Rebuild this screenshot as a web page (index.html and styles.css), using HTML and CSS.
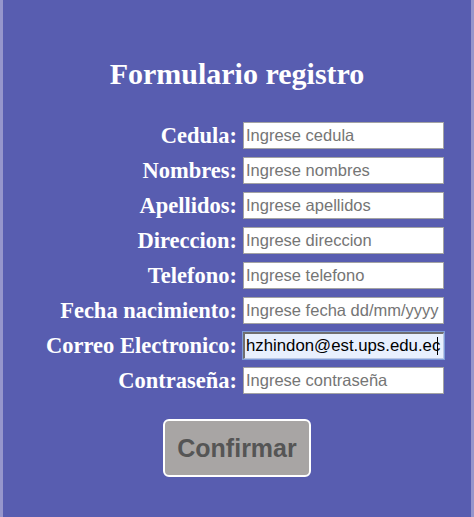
FILE: index.html
```html
<!DOCTYPE html>
<html lang="es">
<head>
<meta charset="utf-8">
<title>Formulario registro</title>
<link rel="stylesheet" href="styles.css">
</head>
<body>
<div class="page">
  <h1 class="title">Formulario registro</h1>
  <form class="form">
    <label class="lbl" for="cedula">Cedula:</label>
    <input class="field" id="cedula" type="text" placeholder="Ingrese cedula">
    <label class="lbl" for="nombres">Nombres:</label>
    <input class="field" id="nombres" type="text" placeholder="Ingrese nombres">
    <label class="lbl" for="apellidos">Apellidos:</label>
    <input class="field" id="apellidos" type="text" placeholder="Ingrese apellidos">
    <label class="lbl" for="direccion">Direccion:</label>
    <input class="field" id="direccion" type="text" placeholder="Ingrese direccion">
    <label class="lbl" for="telefono">Telefono:</label>
    <input class="field" id="telefono" type="text" placeholder="Ingrese telefono">
    <label class="lbl" for="fecha">Fecha nacimiento:</label>
    <input class="field" id="fecha" type="text" placeholder="Ingrese fecha dd/mm/yyyy">
    <label class="lbl" for="correo">Correo Electronico:</label>
    <span class="field-wrap">
      <input class="field field-focus" id="correo" type="text" value="hzhindon@est.ups.edu.ec">
      <span class="caret"></span>
    </span>
    <label class="lbl" for="pass">Contraseña:</label>
    <input class="field" id="pass" type="text" placeholder="Ingrese contraseña">
    <div class="actions">
      <button class="btn" type="button">Confirmar</button>
    </div>
  </form>
</div>
</body>
</html>
```
FILE: styles.css
```css
html, body {
  margin: 0;
  padding: 0;
}
body {
  background: #585db0;
}
.page {
  box-sizing: border-box;
  min-height: 517px;
  background: #585db0;
  border-left: 3px solid #9696cc;
  border-right: 3px solid #9696cc;
  padding-top: 57px;
  font-family: "Liberation Serif", "Times New Roman", serif;
  color: #ffffff;
}
.title {
  margin: 0;
  font-size: 30px;
  font-weight: bold;
  text-align: center;
  line-height: 33px;
}
.form {
  margin-top: 32px;
  display: grid;
  grid-template-columns: 234px 201px;
  column-gap: 6px;
  row-gap: 8px;
  align-items: center;
}
.lbl {
  text-align: right;
  font-size: 22.5px;
  font-weight: bold;
  line-height: 24px;
  white-space: nowrap;
}
.field {
  box-sizing: border-box;
  width: 201px;
  height: 27px;
  margin: 0;
  padding: 0 2px;
  border: 1px solid #a3a3a3;
  background: #ffffff;
  font-family: "Liberation Sans", Arial, sans-serif;
  font-size: 16.5px;
  color: #000000;
  outline: none;
}
.field::placeholder {
  color: #757575;
  opacity: 1;
}
.field-wrap {
  position: relative;
  display: block;
  width: 201px;
  height: 27px;
}
.field-focus {
  background: #e8f0fe;
  border-top: 2px solid #6f6f6f;
  border-left: 2px solid #6f6f6f;
  border-right: 1px solid #b9c6e4;
  border-bottom: 1px solid #b9c6e4;
  padding-left: 1px;
  font-size: 16.8px;
  outline: 1px solid #7d9bd9;
}
.caret {
  position: absolute;
  left: 194px;
  top: 5px;
  width: 1px;
  height: 18px;
  background: #000000;
}
.actions {
  grid-column: 1 / -1;
  display: flex;
  justify-content: center;
  margin-top: 17px;
  margin-left: -3px;
  width: 474px;
}
.btn {
  box-sizing: border-box;
  width: 148px;
  height: 58px;
  border: 2px solid #ffffff;
  border-radius: 6px;
  background: #a8a5a4;
  color: #555555;
  font-family: "Liberation Sans", Arial, sans-serif;
  font-size: 25px;
  font-weight: bold;
  padding: 0;
}
```
